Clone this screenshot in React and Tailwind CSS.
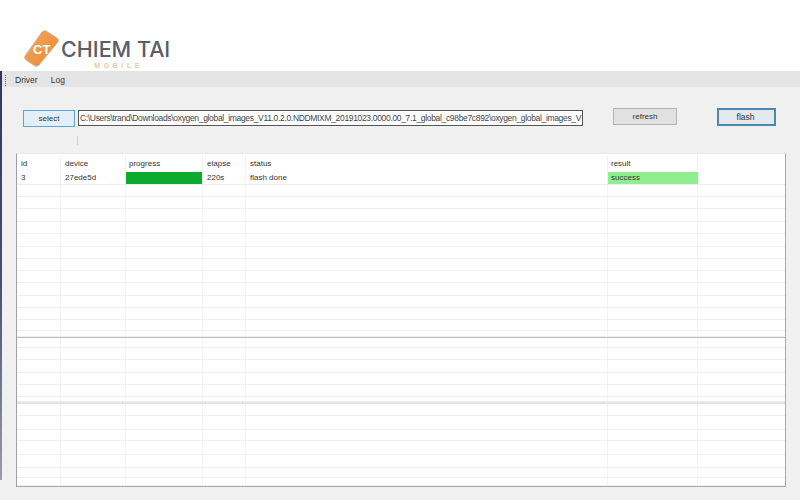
import React from 'react';

const columns = [
  { name: 'id', width: 'w-[44px]', pad: 'pl-[4px]' },
  { name: 'device', width: 'w-[65px]', pad: 'pl-[4px]' },
  { name: 'progress', width: 'w-[77px]', pad: 'pl-[3px]' },
  { name: 'elapse', width: 'w-[43px]', pad: 'pl-[4px]' },
  { name: 'status', width: 'w-[362px]', pad: 'pl-[4px]' },
  { name: 'result', width: 'w-[90px]', pad: 'pl-[3px]' },
  { name: '', width: 'flex-1', pad: '' },
];

const upperRows = [12, 12, 13, 12, 13, 12, 12, 12, 13, 12, 12, 11, 6];
const middleRows = [10, 12, 13, 12, 12, 5];
const lowerRows = [12, 14, 11, 14, 13, 10, 8];

const Logo = () => (
  <div className="flex items-start pl-[24px] pt-[29px]">
    <svg width="36" height="39" viewBox="0 0 36 39" className="shrink-0">
      <defs>
        <linearGradient id="tile" x1="0" y1="0" x2="1" y2="1">
          <stop offset="0" stopColor="#f5a860" />
          <stop offset="1" stopColor="#e8872c" />
        </linearGradient>
      </defs>
      <path d="M18 3 Q20 1 22 2 L33 9 Q35 10.5 34 13 L15 36 Q13 38 11 37 L2 31 Q0 29 1 27 Z" fill="url(#tile)" stroke="#cdb7a0" strokeWidth="1" />
      <text x="9" y="25" fontFamily="Liberation Sans" fontWeight="700" fontSize="13" fill="#ffffff">CT</text>
    </svg>
    <div className="ml-[1px] flex flex-col items-center">
      <span className="mt-[9px] whitespace-nowrap font-['Inter',sans-serif] text-[21.5px] leading-[22px] font-medium text-[#5a5e66]">CHIEM TAI</span>
      <span className="mt-[2px] ml-[6px] whitespace-nowrap font-['Liberation_Sans',sans-serif] text-[7px] leading-[7px] font-bold tracking-[3.6px] text-[#ecc9a4]">MOBILE</span>
    </div>
  </div>
);

const GridRow = ({ height }) => (
  <div className="flex border-b border-[#f0f0f0]" style={{ height }}>
    {columns.map((c, i) => (
      <div key={i} className={`${c.width} border-r border-[#f3f3f3] last:border-r-0`} />
    ))}
  </div>
);

const App = () => {
  return (
    <div className="flex h-[500px] w-[800px] flex-col overflow-hidden bg-white font-['Liberation_Sans',sans-serif] text-[8px] text-[#333]">
      <div className="h-[71px] shrink-0">
        <Logo />
      </div>

      <div className="flex flex-1 bg-[#f0f0f0]">
        <div className="mb-[20px] w-[2px] shrink-0 bg-gradient-to-b from-[#34365a] via-[#4a4c70] to-[#9a9ab0]" />

        <div className="flex-1">
          <div className="flex h-[16px] items-center bg-[#e4e4e4] pt-[2px] text-[8.5px] text-[#333]">
            <div className="ml-[3px] mr-[9px] h-[11px] w-px border-l border-dotted border-[#777]" />
            <span>Driver</span>
            <span className="ml-[13px]">Log</span>
          </div>

          <div className="pl-[14px] pr-[14px]">
            <div className="relative flex h-[66px] items-start pt-[21px]">
              <div className="mt-[2px] ml-[7px] flex h-[17px] w-[52px] items-center justify-center border border-[#5ba4d4] bg-[#e3eff7] text-[8px]">select</div>
              <div className="mt-[2px] ml-[3px] flex h-[16px] w-[505px] items-center overflow-hidden whitespace-nowrap border border-[#555] bg-white pl-[1px] text-[8.5px] tracking-[-0.33px] text-[#444]">
                {'C:\\Users\\trand\\Downloads\\oxygen_global_images_V11.0.2.0.NDDMIXM_20191023.0000.00_7.1_global_c98be7c892\\oxygen_global_images_V'}
              </div>
              <div className="ml-[30px] flex h-[17px] w-[64px] items-center justify-center border border-[#b4b4b4] bg-[#e1e1e1]">refresh</div>
              <div className="ml-[40px] flex h-[18px] w-[59px] items-center justify-center border-2 border-[#4d87ad] bg-[#e3e8ec] pr-[2px] text-[8.5px]">flash</div>
              <div className="absolute left-[61px] top-[49px] h-[9px] w-px bg-[#cfcfcf]" />
            </div>

            <div className="h-[334px] w-[770px] border border-t-[#ececec] border-r-[#a8a8a8] border-b-[#a8a8a8] border-l-[#a0a0a0] bg-white pt-[1px]">
              <div className="flex h-[16px] items-center">
                {columns.map((c, i) => (
                  <div key={i} className={`${c.width} ${c.pad} flex h-full items-center border-r border-[#f3f3f3] pt-px last:border-r-0`}>{c.name}</div>
                ))}
              </div>

              <div className="flex h-[14px] border-b border-[#ededed]">
                <div className="flex w-[44px] items-center border-r border-[#f3f3f3] pl-[4px] pt-px">3</div>
                <div className="flex w-[65px] items-center border-r border-[#f3f3f3] pl-[4px] pt-px">27ede5d</div>
                <div className="w-[77px] border-r border-[#f3f3f3] pt-px">
                  <div className="h-[12px] w-[76px] bg-[#0eaa2e]" />
                </div>
                <div className="flex w-[43px] items-center border-r border-[#f3f3f3] pl-[4px] pt-px">220s</div>
                <div className="flex w-[362px] items-center border-r border-[#f3f3f3] pl-[4px] pt-px">flash done</div>
                <div className="w-[90px] pt-px">
                  <div className="flex h-[12px] items-center bg-[#90ee90] pl-[3px]">success</div>
                </div>
                <div className="flex-1 border-l border-[#f3f3f3]" />
              </div>

              {upperRows.map((h, i) => <GridRow key={i} height={h} />)}
              <div className="h-px bg-[#bdbdbd]" />
              {middleRows.map((h, i) => <GridRow key={i} height={h} />)}
              <div className="h-[2px] bg-[#e2e2e2]" />
              {lowerRows.map((h, i) => <GridRow key={i} height={h} />)}
            </div>
          </div>
        </div>
      </div>
    </div>
  );
};

export default App;
